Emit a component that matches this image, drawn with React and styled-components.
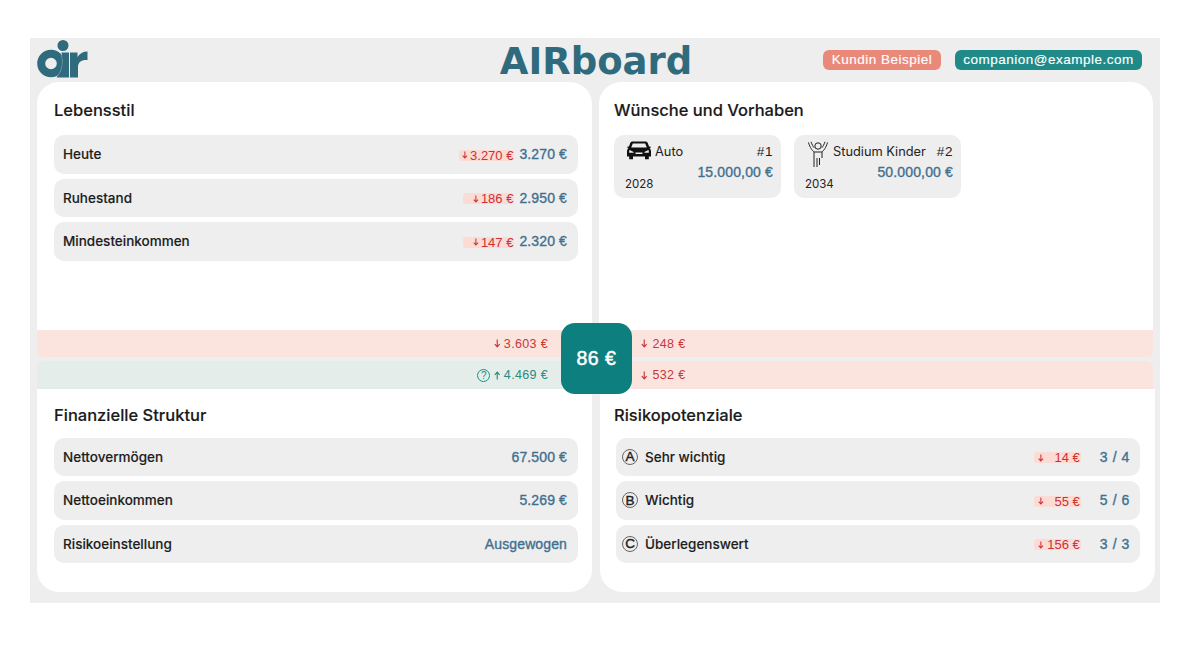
import React from "react";
import styled, { createGlobalStyle } from "styled-components";

const Global = createGlobalStyle`
  html, body { margin: 0; padding: 0; background: #fff; }
  body { font-family: Inter, "Liberation Sans", sans-serif; color: #1c1c1c; }
  * { box-sizing: border-box; }
`;
const Page = styled.div`
  width: 1200px; height: 650px; padding: 38px 40px 47px 30px;
`;
const Board = styled.div`
  width: 1130px; height: 565px; background: #eeeeee; padding: 0 5px 11px 7px;
  display: flex; flex-direction: column;
`;
const Header = styled.header`
  height: 44px; display: grid; grid-template-columns: 1fr auto 1fr; align-items: center;
`;
const LogoSlot = styled.div`
  display: flex; align-items: flex-start; height: 44px;
`;
const Title = styled.h1`
  margin: 0; font-family: "DejaVu Sans", sans-serif; font-weight: 700; font-size: 37px; line-height: 44px;
  color: #2f6b7d; position: relative; top: 2px; white-space: nowrap;
`;
const Pills = styled.div`
  display: flex; justify-content: flex-end; gap: 14px; padding-right: 13px; margin-top: -1px;
`;
const Pill = styled.span`
  height: 20px; line-height: 19px; width: ${p => p.$w}px; text-align: center; border-radius: 6px; color: #fff;
  background: ${p => p.$bg}; font-family: "Liberation Sans", sans-serif; font-weight: 400; font-size: 13.5px;
  letter-spacing: 0.5px; -webkit-text-stroke: 0.15px #fff; white-space: nowrap;
`;
const Columns = styled.div`
  display: grid; grid-template-columns: ${p => p.$cols}; column-gap: ${p => p.$gap}px;
`;
const TopCard = styled.section`
  height: 248px; background: #fff; border-radius: 22px 22px 0 0; padding: 18px 14px 0 ${p => p.$left ?? 17}px;
`;
const BottomCard = styled.section`
  height: 203px; background: #fff; border-radius: 0 0 22px 22px;
  padding: 15.6px ${p => p.$right ?? 14}px 0 ${p => p.$left ?? 17}px;
`;
const CardTitle = styled.h2`
  margin: 0; font-size: 16.5px; line-height: 20px; font-weight: 500; color: #1a1a1a; margin-bottom: ${p => p.$mb}px;
  -webkit-text-stroke: 0.15px #1a1a1a;
`;
const Rows = styled.div`
  display: flex; flex-direction: column; gap: 5px; margin-left: ${p => p.$inset ?? 0}px;
`;
const Row = styled.div`
  height: 38.5px; background: #eeeeee; border-radius: 10px; padding: 0 ${p => p.$end ?? 11}px 0 ${p => p.$pad ?? 9}px;
  display: flex; align-items: center; font-size: 13.5px; font-weight: 500; color: #1d1d1d;
  -webkit-text-stroke: 0.12px #1d1d1d;
`;
const RowLabel = styled.span`
  flex: 1; display: flex; align-items: center; gap: 7px;
`;
const Delta = styled.span`
  height: 11px; width: ${p => p.$w}px; background: #fbdcd4; border-radius: 3px; display: flex; align-items: center; gap: 2px;
  justify-content: ${p => (p.$split ? "space-between" : "flex-end")}; padding: ${p => (p.$split ? "0 1px 0 4px" : "0 1px")};
  font-family: "Liberation Sans", sans-serif; font-size: 13px; font-weight: 400; color: #cc3038; white-space: nowrap;
  position: relative; top: 1px; -webkit-text-stroke: 0;
`;
const Value = styled.span`
  margin-left: ${p => p.$ml ?? 5}px; font-family: "Liberation Sans", sans-serif; font-weight: 400; font-size: 14px;
  letter-spacing: ${p => p.$ls ?? 0.12}px; color: #41708f; -webkit-text-stroke: 0.35px #41708f; white-space: nowrap;
`;
const Letter = styled.span`
  width: 16px; height: 16px; border-radius: 50%; border: 1px solid #666; display: inline-flex; align-items: center;
  justify-content: center; font-family: "Liberation Sans", sans-serif; font-size: 13.5px; font-weight: 400; line-height: 1; color: #222;
  -webkit-text-stroke: 0.4px #222;
`;
const Wishes = styled.div`
  display: flex; gap: 13px;
`;
const Wish = styled.article`
  width: 167px; height: 63px; background: #eeeeee; border-radius: 10px; padding: 4px 8px 0 11px;
  display: flex; flex-direction: column;
`;
const WishHead = styled.div`
  display: flex; align-items: flex-start; height: 26px; font-size: 12.8px; font-weight: 400; color: #222;
`;
const WishIcon = styled.span`
  display: flex; margin: ${p => p.$m};
`;
const WishName = styled.span`
  flex: 1; line-height: 16px; margin-top: 5px;
`;
const WishRank = styled.span`
  font-family: "Liberation Sans", sans-serif; font-size: 13.5px; line-height: 16px; margin-top: 5px; letter-spacing: .6px;
`;
const WishAmount = styled.div`
  text-align: right; font-family: "Liberation Sans", sans-serif; font-size: 14px; letter-spacing: .15px;
  color: #41708f; -webkit-text-stroke: 0.35px #41708f; line-height: 16px; margin-top: -1px;
`;
const WishYear = styled.div`
  font-size: 11.5px; line-height: 14px; color: #222; margin-top: -3px;
`;
const Bands = styled.div`
  position: relative; display: flex; flex-direction: column; gap: 4px; height: 59px; width: 1116px;
`;
const BandRow = styled.div`
  display: grid; grid-template-columns: 1fr 1fr; height: ${p => p.$h}px;
  border-radius: ${p => p.$radius};
  overflow: hidden;
`;
const BandCell = styled.div`
  background: ${p => (p.$good ? "#e4ede9" : "#fbe4dd")}; color: ${p => (p.$good ? "#2a8a80" : "#c8383c")};
  display: flex; align-items: center; justify-content: ${p => (p.$end ? "flex-end" : "flex-start")};
  padding: ${p => (p.$end ? "0 47px 0 0" : "0 0 0 46px")};
  font-family: "Liberation Sans", sans-serif; font-size: 12.5px; letter-spacing: .35px; white-space: nowrap;
  gap: ${p => (p.$end ? 3 : 5)}px;
`;
const Help = styled.span`
  width: 13px; height: 13px; border-radius: 50%; border: 1px solid #2a8a80; font-size: 10px; line-height: 11px; text-align: center; margin-right: 1px; letter-spacing: 0;
`;
const Total = styled.div`
  position: absolute; left: 524px; top: -7px; width: 71px; height: 71px; border-radius: 14px; background: #0e7f7f; color: #fff;
  display: flex; align-items: center; justify-content: center;
  font-family: "Liberation Sans", sans-serif; font-weight: 400; font-size: 19.5px; letter-spacing: .5px; -webkit-text-stroke: 0.5px #fff;
`;

const Logo = () => (
  <svg width="52" height="40" viewBox="0 0 52 40" style={{ marginTop: 2 }}>
    <circle cx="14" cy="23.5" r="9.8" fill="none" stroke="#2f6b7d" strokeWidth="8" />
    <circle cx="26" cy="5.5" r="5.5" fill="#2f6b7d" />
    <path d="M24.5 12.5H32V37.5H19.5C23.5 33 25.5 28 25.5 22.5C25.5 18.5 25 15.5 24.5 12.5Z" fill="#2f6b7d" stroke="#eeeeee" strokeWidth="0.6" paintOrder="stroke" />
    <path d="M33 12.5H40.5V17C42.5 13.5 46 11.5 50.5 11.5V20C45 19.5 41 21.5 41 27V37.5H33Z" fill="#2f6b7d" />
  </svg>
);
const CarIcon = () => (
  <svg width="24" height="19" viewBox="0 0 24 19">
    <path fill="#111" fillRule="evenodd" d="M5.5 0.5H18.5C19.6 0.5 20.4 1.1 20.8 2.1L22 5.5H23.5V7.2H22.6C23.4 8 24 9 24 10.2V15.5H21.8V18.3H18V15.5H6V18.3H2.2V15.5H0V10.2C0 9 .6 8 1.4 7.2H.5V5.5H2L3.2 2.1C3.6 1.1 4.4 .5 5.5 .5ZM5.8 2.4L4.2 6.6H19.8L18.2 2.4ZM2.2 9.2V11.8H6.6V11L3.2 9.2ZM21.8 9.2L20.8 9.2L17.4 11V11.8H21.8ZM8.5 11.5V13H15.5V11.5Z" />
  </svg>
);
const GradIcon = () => (
  <svg width="22" height="28" viewBox="0 0 22 28" fill="none" stroke="#222" strokeWidth="1">
    <circle cx="11" cy="5" r="3.2" />
    <path d="M1.5 1.5C3 7 5.5 9.5 7 11V26M20.5 1.5C19 7 16.5 9.5 15 11V17M10 17V26M12.5 17V24" />
    <path d="M4 .8C5 3.5 6 5.5 7.2 6.8M18 .8C17 3.5 16 5.5 14.8 6.8M7 11H15" />
  </svg>
);
const ArrowGlyph = ({ up, size = 9 }) => (
  <svg width={size * 0.72} height={size} viewBox="0 0 7 10" fill="none" stroke="currentColor" strokeWidth="1.3" style={{ flex: "none" }}>
    {up ? <path d="M3.5 9.5V1.5M.8 4.2L3.5 1.2L6.2 4.2" /> : <path d="M3.5 .5V8.5M.8 5.8L3.5 8.8L6.2 5.8" />}
  </svg>
);

const DeltaBox = ({ amount, w = 51, split }) => (
  <Delta $w={w} $split={split}>
    <ArrowGlyph size={8} />
    <span>{amount} €</span>
  </Delta>
);

export default function App() {
  return (
    <Page>
      <Global />
      <Board>
        <Header>
          <LogoSlot><Logo /></LogoSlot>
          <Title>AIRboard</Title>
          <Pills>
            <Pill $bg="#e8897a" $w={118}>Kundin Beispiel</Pill>
            <Pill $bg="#1f8a87" $w={187}>companion@example.com</Pill>
          </Pills>
        </Header>
        <Columns $cols="555px 554px" $gap={7}>
          <TopCard>
            <CardTitle $mb={15}>Lebensstil</CardTitle>
            <Rows>
              <Row><RowLabel>Heute</RowLabel><DeltaBox amount="3.270" w={55} /><Value>3.270 €</Value></Row>
              <Row><RowLabel>Ruhestand</RowLabel><DeltaBox amount="186" /><Value>2.950 €</Value></Row>
              <Row><RowLabel>Mindesteinkommen</RowLabel><DeltaBox amount="147" /><Value>2.320 €</Value></Row>
            </Rows>
          </TopCard>
          <TopCard $left={15}>
            <CardTitle $mb={15}>Wünsche und Vorhaben</CardTitle>
            <Wishes>
              <Wish>
                <WishHead>
                  <WishIcon $m="2px 4px 0 2px"><CarIcon /></WishIcon>
                  <WishName>Auto</WishName>
                  <WishRank>#1</WishRank>
                </WishHead>
                <WishAmount>15.000,00 €</WishAmount>
                <WishYear>2028</WishYear>
              </Wish>
              <Wish>
                <WishHead>
                  <WishIcon $m="2px 4px 0 2px"><GradIcon /></WishIcon>
                  <WishName>Studium Kinder</WishName>
                  <WishRank>#2</WishRank>
                </WishHead>
                <WishAmount>50.000,00 €</WishAmount>
                <WishYear>2034</WishYear>
              </Wish>
            </Wishes>
          </TopCard>
        </Columns>
        <Bands>
          <BandRow $h={27} $radius="0 0 6px 6px">
            <BandCell $end><ArrowGlyph /> 3.603 €</BandCell>
            <BandCell><ArrowGlyph /> 248 €</BandCell>
          </BandRow>
          <BandRow $h={28} $radius="6px 6px 0 0">
            <BandCell $good $end><Help>?</Help><ArrowGlyph up /> 4.469 €</BandCell>
            <BandCell><ArrowGlyph /> 532 €</BandCell>
          </BandRow>
          <Total>86 €</Total>
        </Bands>
        <Columns $cols="555px 555px" $gap={8}>
          <BottomCard>
            <CardTitle $mb={13}>Finanzielle Struktur</CardTitle>
            <Rows>
              <Row><RowLabel>Nettovermögen</RowLabel><Value>67.500 €</Value></Row>
              <Row><RowLabel>Nettoeinkommen</RowLabel><Value>5.269 €</Value></Row>
              <Row><RowLabel>Risikoeinstellung</RowLabel><Value>Ausgewogen</Value></Row>
            </Rows>
          </BottomCard>
          <BottomCard $left={14} $right={15}>
            <CardTitle $mb={13}>Risikopotenziale</CardTitle>
            <Rows $inset={2}>
              <Row $pad={6} $end={10}><RowLabel><Letter>A</Letter>Sehr wichtig</RowLabel><DeltaBox amount="14" w={47} split /><Value $ml={19} $ls={0.6}>3 / 4</Value></Row>
              <Row $pad={6} $end={10}><RowLabel><Letter>B</Letter>Wichtig</RowLabel><DeltaBox amount="55" w={47} split /><Value $ml={19} $ls={0.6}>5 / 6</Value></Row>
              <Row $pad={6} $end={10}><RowLabel><Letter>C</Letter>Überlegenswert</RowLabel><DeltaBox amount="156" w={47} split /><Value $ml={19} $ls={0.6}>3 / 3</Value></Row>
            </Rows>
          </BottomCard>
        </Columns>
      </Board>
    </Page>
  );
}
